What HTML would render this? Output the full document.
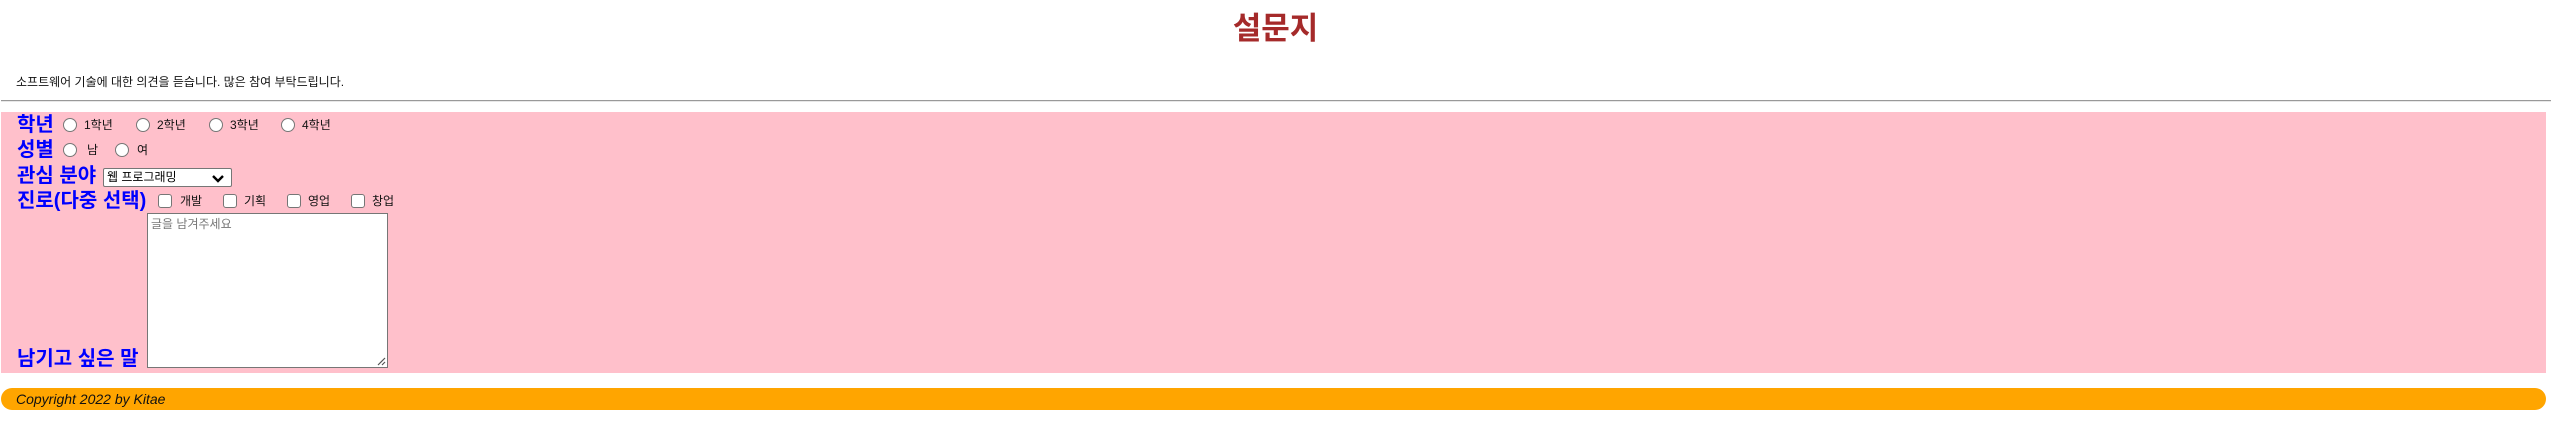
<!DOCTYPE html>
<html><head><meta charset="utf-8"><style>
*{margin:0;padding:0;box-sizing:border-box}
body{width:2551px;height:442px;background:#fff;position:relative;overflow:hidden;font-family:"Liberation Sans","Noto Sans CJK KR",sans-serif}
h1{position:absolute;left:0;width:2551px;top:9px;text-align:center;font-size:31px;color:#a52a2a;font-weight:bold;font-family:"Liberation Sans","Noto Sans CJK KR",sans-serif;line-height:40px}
.hr{position:absolute;left:1px;top:100px;width:2550px;height:2px;border-top:1px solid #999;border-bottom:1px solid #e8e8e8}
.pink{position:absolute;left:1px;top:112px;width:2545px;height:261px;background:#ffc0cb}
.lab{position:absolute;color:#00f;font-weight:bold;font-size:20px;line-height:24px;white-space:nowrap}
.t{position:absolute;font-size:12px;line-height:16px;color:#111;white-space:nowrap}
.r{position:absolute;width:14px;height:14px;border:1px solid #767676;border-radius:50%;background:#fff}
.c{position:absolute;width:14px;height:14px;border:1px solid #767676;border-radius:3px;background:#fff}
.sel{position:absolute;left:103px;top:168px;width:129px;height:19px;border:1px solid #767676;border-radius:2px;background:#fff;font-size:12px;line-height:17px;padding-left:3px}
.ta{position:absolute;left:147px;top:213px;width:241px;height:155px;border:1px solid #767676;background:#fff;font-size:12px;color:#777;padding:2px 3px;line-height:16px}
.foot{position:absolute;left:1px;top:388px;width:2545px;height:22px;background:#ffa500;border-radius:11px}
</style></head><body>
<h1>설문지</h1>
<div class="t" style="left:16px;top:74px">소프트웨어 기술에 대한 의견을 듣습니다. 많은 참여 부탁드립니다.</div>
<div class="hr"></div>
<div class="pink"></div>
<div class="lab" style="left:17px;top:113px">학년</div>
<div class="r" style="left:63px;top:118px"></div><div class="t" style="left:84px;top:117px">1학년</div>
<div class="r" style="left:136px;top:118px"></div><div class="t" style="left:157px;top:117px">2학년</div>
<div class="r" style="left:209px;top:118px"></div><div class="t" style="left:230px;top:117px">3학년</div>
<div class="r" style="left:281px;top:118px"></div><div class="t" style="left:302px;top:117px">4학년</div>
<div class="lab" style="left:17px;top:138px">성별</div>
<div class="r" style="left:63px;top:143px"></div><div class="t" style="left:87px;top:142px">남</div>
<div class="r" style="left:115px;top:143px"></div><div class="t" style="left:137px;top:142px">여</div>
<div class="lab" style="left:17px;top:164px">관심 분야</div>
<div class="sel">웹 프로그래밍<svg style="position:absolute;right:6px;top:5px" width="14" height="9" viewBox="0 0 14 9"><path d="M2 2l5 5 5-5" stroke="#000" stroke-width="2.4" fill="none"/></svg></div>
<div class="lab" style="left:17px;top:189px">진로(다중 선택)</div>
<div class="c" style="left:158px;top:194px"></div><div class="t" style="left:180px;top:193px">개발</div>
<div class="c" style="left:223px;top:194px"></div><div class="t" style="left:244px;top:193px">기획</div>
<div class="c" style="left:287px;top:194px"></div><div class="t" style="left:308px;top:193px">영업</div>
<div class="c" style="left:351px;top:194px"></div><div class="t" style="left:372px;top:193px">창업</div>
<div class="lab" style="left:17px;top:347px">남기고 싶은 말</div>
<div class="ta">글을 남겨주세요<svg style="position:absolute;right:1px;bottom:1px" width="10" height="10"><path d="M9 2L2 9M9 6L6 9" stroke="#555" stroke-width="1.2"/></svg></div>
<div class="foot"></div>
<div class="t" style="left:16px;top:391px;font-style:italic;font-size:14px">Copyright 2022 by Kitae</div>
</body></html>
